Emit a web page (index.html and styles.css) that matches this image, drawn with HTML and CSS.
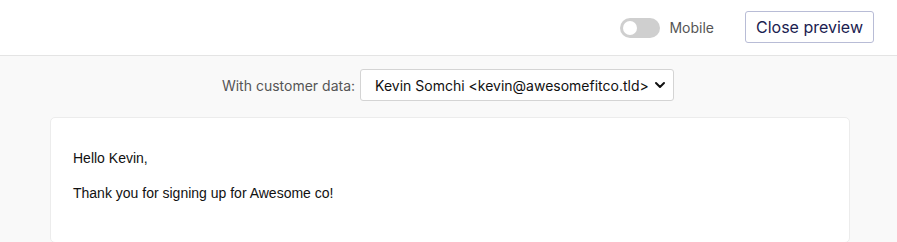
FILE: index.html
```html
<!DOCTYPE html>
<html>
<head>
<meta charset="utf-8">
<title>Email preview</title>
<link rel="stylesheet" href="styles.css">
</head>
<body>
<div class="topbar">
  <label class="switch">
    <span class="track"><span class="knob"></span></span>
    <span class="switch-label">Mobile</span>
  </label>
  <button class="close-btn">Close preview</button>
</div>

<div class="preview">
  <div class="customer">
    <span class="customer-label">With customer data:</span>
    <div class="select">
      <span>Kevin Somchi &lt;kevin@awesomefitco.tld&gt;</span>
      <svg width="12" height="8" viewBox="0 0 12 8"><path d="M2 2 L6 6 L10 2" fill="none" stroke="#111" stroke-width="2" stroke-linecap="round" stroke-linejoin="round"/></svg>
    </div>
  </div>

  <div class="card">
    <p>Hello Kevin,</p>
    <p>Thank you for signing up for Awesome co!</p>
  </div>
</div>
</body>
</html>
```

FILE: styles.css
```css
html, body {
  margin: 0;
  height: 100%;
}

body {
  font-family: Inter, "Noto Sans", sans-serif;
  background: #f9f9f9;
  overflow: hidden;
}

.topbar {
  height: 56px;
  background: #fff;
  border-bottom: 1px solid #e4e4e4;
  display: flex;
  align-items: center;
  justify-content: flex-end;
  padding-right: 23px;
  box-sizing: border-box;
}

.switch {
  display: flex;
  align-items: center;
  gap: 9px;
  margin-right: 31px;
}

.track {
  width: 40px;
  height: 20px;
  border-radius: 10px;
  background: #cfcfcf;
  display: flex;
  align-items: center;
  padding-left: 3px;
  box-sizing: border-box;
}

.knob {
  width: 14px;
  height: 14px;
  border-radius: 50%;
  background: #fff;
}

.switch-label {
  font-size: 14px;
  color: #555;
}

.close-btn {
  height: 32px;
  padding: 0 10px;
  background: #fff;
  border: 1px solid #b8bcd6;
  border-radius: 3px;
  font-family: Inter, sans-serif;
  font-size: 16px;
  color: #1b2150;
  margin-top: -2px;
}

.preview {
  padding: 13px 47px 0 50px;
}

.customer {
  display: flex;
  align-items: center;
  justify-content: center;
  gap: 5px;
  margin-left: -4px;
}

.customer-label {
  font-size: 14px;
  color: #555;
}

.select {
  width: 314px;
  height: 32px;
  box-sizing: border-box;
  background: #fff;
  border: 1px solid #d4d4d4;
  border-radius: 3px;
  display: flex;
  align-items: center;
  justify-content: space-between;
  padding: 0 7px 0 14px;
  font-size: 14px;
  color: #111;
}

.card {
  margin-top: 16px;
  background: #fff;
  border: 1px solid #ececec;
  border-radius: 5px;
  height: 80px;
  padding: 22px 22px;
  font-family: "Liberation Sans", Arial, sans-serif;
  font-size: 14px;
  color: #111;
}

.card p {
  margin: 10px 0 0;
  line-height: 16px;
}

.card p + p {
  margin-top: 19px;
}
```
